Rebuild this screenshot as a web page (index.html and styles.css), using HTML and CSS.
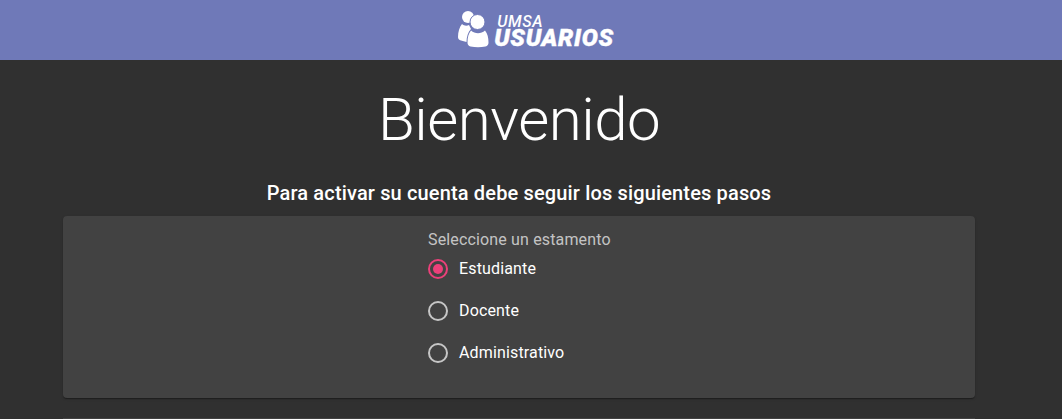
FILE: index.html
```html
<!DOCTYPE html>
<html lang="es">

<head>
    <meta charset="UTF-8">
    <meta name="viewport" content="width=device-width, initial-scale=1.0">
    <title>UMSA Usuarios</title>
    <link rel="stylesheet" href="styles.css">
</head>

<body>
    <!-- Barra superior -->
    <header class="toolbar">
        <div class="logo">
            <svg class="logo-icon" xmlns="http://www.w3.org/2000/svg" width="31" height="37" viewBox="0 0 31 37" fill="#fff">
                <circle cx="10" cy="6" r="6" />
                <path d="M4 13C1.500 16 0 21 0 26c0 2 1 3 3 3.500L8.500 31c0-5 1.500-10 4.500-13l-2-4c-2 1-5 1-7-1z" />
                <circle cx="19.500" cy="11" r="7.500" stroke="#6f79b8" stroke-width="1" />
                <path d="M13 19.500c-2.500 3-3.500 7-3.500 12 0 2 1 3.500 3 4 5 1 10 1 15 0 2-.5 3-2 3-4 0-5-1-9-3.500-12-4 3.500-10 3.500-14 0z" />
            </svg>
            <div class="logo-text">
                <span class="logo-small">UMSA</span>
                <span class="logo-big">USUARIOS</span>
            </div>
        </div>
    </header>

    <main class="content">
        <h1 class="title">Bienvenido</h1>
        <h2 class="subtitle">Para activar su cuenta debe seguir los siguientes pasos</h2>

        <!-- Selección de estamento -->
        <section class="card">
            <div class="radio-block">
                <div class="radio-label">Seleccione un estamento</div>
                <div class="radio-group">
                    <label class="radio-item radio-checked"><span class="radio-circle"></span><span class="radio-text">Estudiante</span></label>
                    <label class="radio-item"><span class="radio-circle"></span><span class="radio-text">Docente</span></label>
                    <label class="radio-item"><span class="radio-circle"></span><span class="radio-text">Administrativo</span></label>
                </div>
            </div>
        </section>

        <section class="card-next"></section>
    </main>
</body>

</html>
```

FILE: styles.css
```css
/* Base */
html,
body {
    height: 419px;
    overflow: hidden;
}

body {
    margin: 0;
    background-color: #303030;
    color: #fff;
    font-family: Roboto, "Helvetica Neue", sans-serif;
}

/* Barra superior */
.toolbar {
    display: flex;
    justify-content: center;
    align-items: center;
    height: 60px;
    padding-left: 10px;
    background-color: #6f79b8;
}

.logo {
    display: flex;
    align-items: flex-end;
    gap: 5px;
    margin-top: -1px;
}

.logo-text {
    display: flex;
    flex-direction: column;
}

.logo-small {
    margin-left: 3px;
    font-size: 16px;
    font-style: italic;
    font-weight: 500;
    line-height: 13px;
    letter-spacing: 0.6px;
}

.logo-big {
    font-size: 24px;
    font-style: italic;
    font-weight: 900;
    line-height: 20px;
    letter-spacing: 0.7px;
    -webkit-text-stroke: 0.4px #fff;
}

/* Contenido */
.content {
    width: 912px;
    margin-left: 63px;
}

.title {
    margin: 28px 0 0;
    font-size: 60px;
    font-weight: 300;
    line-height: 64px;
    letter-spacing: -0.5px;
    text-align: center;
}

.subtitle {
    margin: 27px 0 0;
    font-size: 20px;
    font-weight: 500;
    line-height: 28px;
    letter-spacing: 0.15px;
    text-align: center;
}

.card {
    display: flex;
    justify-content: center;
    height: 182px;
    margin-top: 9px;
    border-radius: 4px;
    background-color: #424242;
    box-shadow: 0 2px 1px -1px rgba(0, 0, 0, 0.2), 0 1px 1px 0 rgba(0, 0, 0, 0.14), 0 1px 3px 0 rgba(0, 0, 0, 0.12);
}

.card-next {
    height: 1px;
    margin-top: 20px;
    background-color: #424242;
}

/* Radios */
.radio-block {
    width: 182px;
    padding-top: 14px;
}

.radio-label {
    font-size: 16px;
    line-height: 20px;
    letter-spacing: 0.15px;
    color: rgba(255, 255, 255, 0.7);
    white-space: nowrap;
}

.radio-group {
    display: flex;
    flex-direction: column;
    gap: 22px;
    margin-top: 9px;
}

.radio-item {
    display: flex;
    align-items: center;
    gap: 11px;
    height: 20px;
    font-size: 16px;
    letter-spacing: 0.15px;
    white-space: nowrap;
}

.radio-text {
    margin-bottom: 2px;
}

.radio-circle {
    flex: none;
    box-sizing: border-box;
    display: flex;
    justify-content: center;
    align-items: center;
    width: 20px;
    height: 20px;
    border: 2px solid rgba(255, 255, 255, 0.7);
    border-radius: 50%;
}

.radio-checked .radio-circle {
    border-color: #ec407a;
}

.radio-checked .radio-circle::after {
    content: "";
    width: 10px;
    height: 10px;
    border-radius: 50%;
    background-color: #ec407a;
}
```
